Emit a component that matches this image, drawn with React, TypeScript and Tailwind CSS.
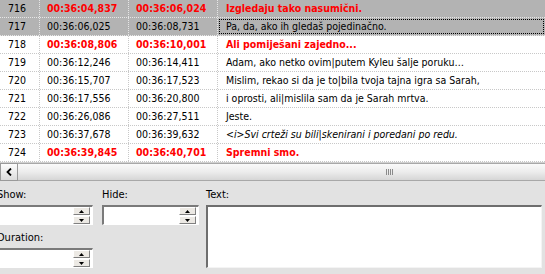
import React from "react";

type Row = { n: number; s: string; h: string; t: string; red?: boolean; sel?: boolean; focus?: boolean; italic?: boolean };

const rows: Row[] = [
  { n: 716, s: "00:36:04,837", h: "00:36:06,024", t: "Izgledaju tako nasumični.", red: true, sel: true },
  { n: 717, s: "00:36:06,025", h: "00:36:08,731", t: "Pa, da, ako ih gledaš pojedinačno.", sel: true, focus: true },
  { n: 718, s: "00:36:08,806", h: "00:36:10,001", t: "Ali pomiješani zajedno...", red: true },
  { n: 719, s: "00:36:12,246", h: "00:36:14,411", t: "Adam, ako netko ovim|putem Kyleu šalje poruku…" },
  { n: 720, s: "00:36:15,707", h: "00:36:17,523", t: "Mislim, rekao si da je to|bila tvoja tajna igra sa Sarah," },
  { n: 721, s: "00:36:17,556", h: "00:36:20,800", t: "i oprosti, ali|mislila sam da je Sarah mrtva." },
  { n: 722, s: "00:36:26,086", h: "00:36:27,511", t: "Jeste." },
  { n: 723, s: "00:36:37,678", h: "00:36:39,632", t: "<i>Svi crteži su bili|skenirani i poredani po redu.", italic: true },
  { n: 724, s: "00:36:39,845", h: "00:36:40,701", t: "Spremni smo.", red: true },
];

function Spin() {
  return (
    <div className="flex flex-col gap-[1px] mr-[1px]">
      {[0, 1].map((i) => (
        <div
          key={i}
          className="w-[17px] h-[8px] bg-[#ece9e4] border border-t-white border-l-white border-r-[#808080] border-b-[#808080] flex items-center justify-center"
        >
          <svg width="5" height="3" viewBox="0 0 5 3">
            {i === 0 ? <path d="M2.5 0L5 3H0z" fill="#000" /> : <path d="M0 0H5L2.5 3z" fill="#000" />}
          </svg>
        </div>
      ))}
    </div>
  );
}

function SpinInput({ w }: { w: string }) {
  return (
    <div className={`${w} h-[20px] bg-white border-t-2 border-l-2 border-t-[#7a7a7a] border-l-[#7a7a7a] border-r border-b border-r-white border-b-white flex items-center justify-end pr-[1px]`}>
      <Spin />
    </div>
  );
}

export default function App() {
  return (
    <div
      className="w-[545px] h-[274px] overflow-hidden bg-white text-[10.5px] text-black flex flex-col"
      style={{ fontFamily: "'DejaVu Sans Condensed', 'DejaVu Sans', sans-serif", fontStretch: "condensed" }}
    >
      <div className="flex flex-col">
        {rows.map((r) => (
          <div
            key={r.n}
            className={`flex h-[18px] border-b border-dotted ${r.sel ? "bg-[#b3b3b3] border-b-[#e6e6e6]" : "border-b-[#c8c8c8]"} ${r.red ? "text-[#ff0000] font-bold" : ""}`}
          >
            <div className={`w-[40px] shrink-0 pl-[8px] flex items-center border-r border-dotted ${r.sel ? "border-r-[#e6e6e6]" : "border-r-[#c8c8c8]"} font-normal text-black`}>
              {r.n}
            </div>
            <div className={`w-[89px] shrink-0 pl-[7px] flex items-center border-r border-dotted ${r.sel ? "border-r-[#e6e6e6]" : "border-r-[#c8c8c8]"}`}>
              {r.s}
            </div>
            <div className={`w-[89px] shrink-0 pl-[7px] flex items-center border-r border-dotted ${r.sel ? "border-r-[#e6e6e6]" : "border-r-[#c8c8c8]"}`}>
              {r.h}
            </div>
            <div className="flex-1 flex items-stretch p-[1px]">
              <div className={`flex-1 flex items-center pl-[6px] whitespace-nowrap ${r.focus ? "border border-dotted border-black" : "border border-transparent"} ${r.italic ? "italic" : ""}`}>
                {r.t}
              </div>
            </div>
          </div>
        ))}
      </div>
      {/* horizontal scrollbar */}
      <div className="h-[19px] flex border-t border-[#d0d0d0] bg-[#f4f4f4]">
        <div className="w-[18px] h-[18px] bg-gradient-to-b from-[#fdfdfd] to-[#dcdcdc] border border-[#9a9a9a] flex items-center justify-center">
          <svg width="6" height="8" viewBox="0 0 6 8">
            <path d="M5 0.5L1.5 4L5 7.5" stroke="#000" strokeWidth="1.8" fill="none" />
          </svg>
        </div>
        <div className="flex-1 h-[18px] border-y border-[#a8a8a8] bg-gradient-to-b from-[#fafafa] via-[#ececec] to-[#d6d6d6] flex items-center pl-[368px]">
          <div className="flex gap-[1px]">
            {[0, 1, 2, 3].map((i) => (
              <div key={i} className="w-[1px] h-[6px] bg-[#8a8a8a]" />
            ))}
          </div>
        </div>
      </div>
      {/* bottom panel */}
      <div className="flex-1 bg-[#e2e2e2] flex pt-[7px] text-[11px]">
        <div className="w-[199px] shrink-0 flex ml-[-3px]">
          <div className="w-[96px] flex flex-col">
            <div className="h-[14px] leading-[14px]">Show:</div>
            <div className="mt-[3px]">
              <SpinInput w="w-[96px]" />
            </div>
            <div className="h-[14px] leading-[14px] mt-[6px]">Duration:</div>
            <div className="mt-[3px]">
              <SpinInput w="w-[96px]" />
            </div>
          </div>
          <div className="ml-[9px] w-[97px] flex flex-col">
            <div className="h-[14px] leading-[14px]">Hide:</div>
            <div className="mt-[3px]">
              <SpinInput w="w-[97px]" />
            </div>
          </div>
        </div>
        <div className="ml-[10px] flex flex-col flex-1 pr-[3px]">
          <div className="h-[14px] leading-[14px]">Text:</div>
          <div className="mt-[3px] h-[63px] bg-white border-t-2 border-l-2 border-t-[#6e6e6e] border-l-[#6e6e6e] border-r border-b border-r-[#f4f4f4] border-b-[#f4f4f4]" />
        </div>
      </div>
    </div>
  );
}
